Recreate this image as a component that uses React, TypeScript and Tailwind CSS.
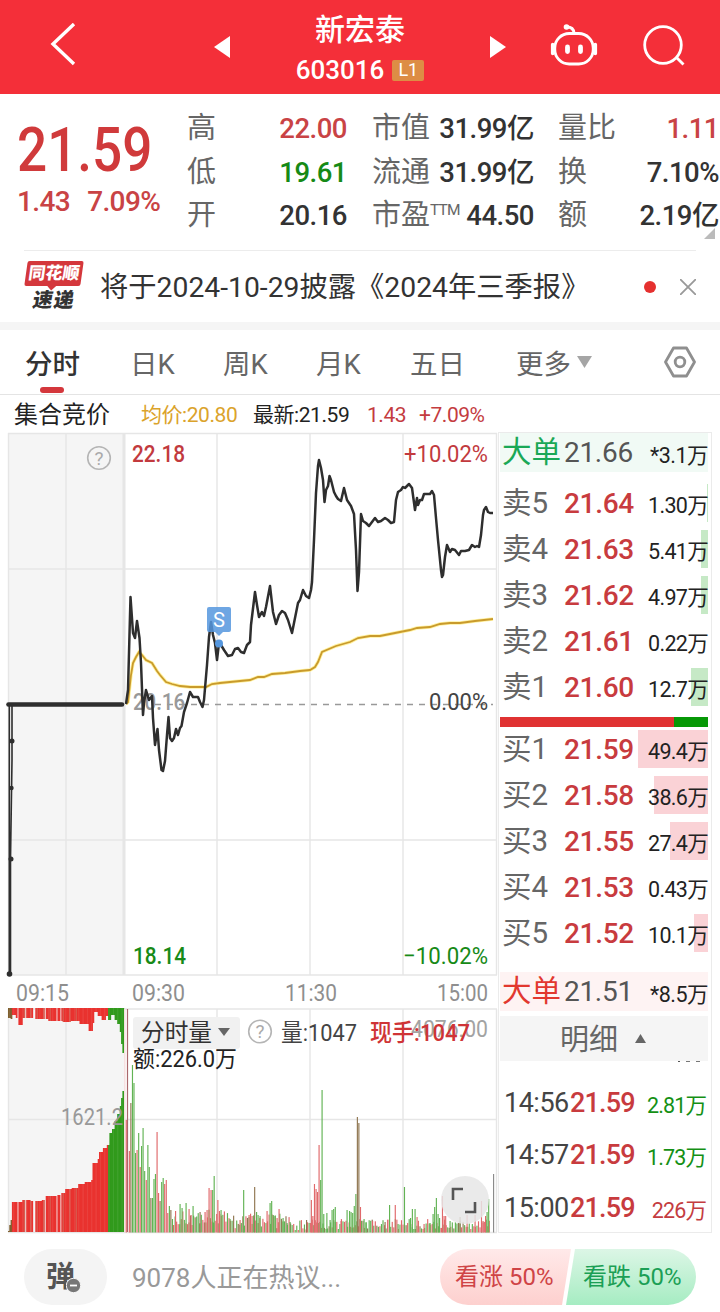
import React from "react"

type Bar = [number, number, string]

const RED = "#e9322f"
const GREEN = "#319a1c"

const PRICE =
  "126,704 128,690 130.5,597 133,633 135,638 137,621 139.5,638 141,663 143,715 144,703 146,690 149,700 152,696 153,718 155,745 157.5,729 159,750 161.5,770 163,771 165,761 167,735 168.5,717 170,738 172,741 174,738 176,729 178,735 180,728 181.5,726 184,712 187,703 190,692 193,697 198,697 200,702 202.5,707 204,700 207,665 209,637 211,622 213,635 215,643 217,660 219,643 221,645 224,650 228,656 232,655 235,649 238,648 241,652 244,653 247,645 250,642 251,625 255,592 257,605 259,617 262,612 264,616 266,607 270,586 273,612 276,624 279,615 282,611 285,613 288,620 292,633 294,623 298,603 300,600 303,590 306,596 309,598 311,590 312,582 314,540 316,493 318,466 319,460 321,468 323,480 324.5,502 326,490 328,486 329.5,476 331,480 334,492 336,496 338,499 341,501 344,488 347,500 351,506 354,514 356,550 357.5,591 359,572 361,514 363,521 366,523 369,526 372,522 375,518 378,522 381,521 385,518 388,520 391,523 394,522 396,500 398,492 401,490 403,487 405,488 407,486 409,484 412,488 415,510 417,498 418,505 420,500 422,500 424,494 430,494 432,491 434,495 436,518 438,540 441,570 442,577 443,575 445,557 447,545 450,552 452,549 455,550 459,555 461,551 465,551 469,550 472,545 475,547 477,546 479,547 481,535 483,515 484,510 486,507 488,512 490,513 493,513"

const AVERAGE =
  "126,704 128,702 131,675 133,663 136,657 139,652 142,655 146,660 152,663 157,671 160,675 166,682 172,684 180,686 190,687 206,687 212,684 220,683 230,682 240,681 250,680 258,677 264,677 272,674 285,673 300,671 310,670 315,667 318,662 322,652 336,646 350,642 358,638 370,636 380,636 395,633 410,630 417,628 430,627 440,624 450,623 460,623 475,621 493,619"

// [x, top, colour]
const PEAKS: Bar[] = [
  [126.2, 1120, "r"], [129.3, 1151, "r"], [130.8, 1103, "d"], [132.4, 1065, "g"], [133.9, 1083, "g"], [135.5, 1153, "g"],
  [137, 1150, "r"], [138.6, 1133, "g"], [140.1, 1167, "r"], [141.5, 1146, "g"], [143, 1128, "g"], [144.6, 1171, "g"],
  [146.2, 1180, "r"], [147.8, 1145, "g"], [149.2, 1167, "g"], [150.8, 1198, "d"], [152.4, 1198, "g"], [153.9, 1179, "g"],
  [155.4, 1174, "g"], [157, 1132, "r"], [158.5, 1193, "r"], [160, 1201, "d"], [161.6, 1182, "g"], [163.1, 1178, "g"],
  [164.6, 1184, "r"], [166.2, 1180, "r"], [167.7, 1213, "r"], [169.3, 1206, "g"], [170.8, 1210, "d"], [172.4, 1219, "g"],
  [175.5, 1211, "r"], [180, 1204, "g"], [182, 1208, "g"], [186, 1203, "g"], [189, 1209, "r"], [191, 1215, "r"], [193, 1206, "g"],
  [200, 1212, "d"], [205, 1212, "r"], [207, 1210, "r"], [209, 1188, "r"], [211, 1190, "r"], [212.6, 1190, "g"], [214.1, 1176, "g"],
  [217.8, 1200, "r"], [219.4, 1211, "r"], [221, 1210, "g"], [230, 1219, "g"], [240, 1220, "r"], [243.6, 1190, "g"], [249, 1215, "r"],
  [252, 1216, "r"], [254.6, 1187, "d"], [256.5, 1212, "g"], [258, 1215, "g"], [260, 1216, "g"], [267, 1211, "r"], [270, 1203, "g"],
  [271.6, 1201, "g"], [273.2, 1215, "g"], [275, 1216, "g"], [277, 1218, "r"], [279, 1209, "r"], [283, 1218, "g"], [287, 1223, "g"],
  [290, 1222, "g"], [306.5, 1220, "d"], [311.3, 1200, "r"], [312.8, 1216, "r"], [314.4, 1184, "r"], [316, 1189, "r"],
  [317.5, 1192, "r"], [319, 1145, "r"], [320.6, 1180, "g"], [322, 1090, "g"], [323.7, 1214, "g"], [326.8, 1213, "g"],
  [330, 1220, "g"], [332, 1210, "g"], [333.6, 1209, "g"], [335.2, 1207, "g"], [341, 1221, "r"], [347, 1210, "g"], [349.5, 1211, "g"],
  [351, 1212, "g"], [352.6, 1213, "g"], [354.2, 1206, "g"], [355.8, 1194, "g"], [357.3, 1117, "d"], [358.8, 1123, "d"],
  [360.4, 1207, "r"], [364, 1219, "g"], [366, 1222, "g"], [372.5, 1221, "r"], [385, 1222, "d"], [389.5, 1205, "g"],
  [395.2, 1205, "r"], [398, 1224, "g"], [404.4, 1187, "g"], [410.5, 1218, "g"], [412.3, 1209, "g"], [415, 1209, "g"],
  [417, 1217, "r"], [424, 1224, "r"], [430, 1223, "g"], [433, 1214, "g"], [434.6, 1207, "g"], [436.3, 1198, "g"], [438, 1214, "g"],
  [439.5, 1218, "g"], [442.4, 1196, "r"], [444, 1216, "r"], [445.6, 1216, "r"], [450, 1221, "g"], [460, 1217, "d"], [467, 1215, "r"],
  [475, 1215, "r"], [481.4, 1201, "r"], [483, 1221, "r"], [485.5, 1216, "r"], [487, 1212, "g"], [488.6, 1199, "g"], [493.5, 1174, "n"],
]

const BAR_FILL: Record<string, string> = { r: "#e0696b", g: "#62b354", d: "#8f7650", n: "#8b8b8b" }

// low trading minutes between the peaks
const QUIET: Bar[] = Array.from({ length: 206 }, (_, i) => {
  const x = 173.5 + i * 1.54
  const noise = (i * 37 + ((i * i) % 17) * 11) % 19
  const base = x < 235 ? 7 : x > 291 && x < 308 ? 2 : 3
  return [x, 1232 - base - noise * (x < 290 ? 0.85 : 0.55), "rgdgrrg"[(i * 5 + (i % 4)) % 7]]
})

const FLOOR = [
  [8, 1231], [9, 1225], [10, 1220], [12, 1202], [22, 1200], [30, 1201], [42, 1200], [44, 1196], [56, 1195], [60, 1193],
  [65, 1189], [72, 1188], [78, 1184], [85, 1182], [91, 1180], [92, 1163], [97, 1159], [99, 1152], [103, 1148], [106, 1145],
  [109, 1133], [112, 1129], [115, 1121], [117, 1114], [119, 1106], [121, 1098], [122.5, 1091],
]
const CEILING = [
  [8, 1018], [10, 1019], [12, 1015], [15, 1018], [18, 1025], [22, 1018], [32, 1019], [48, 1021], [62, 1022], [70, 1021],
  [79, 1024], [84, 1024], [89, 1031], [92, 1023], [94, 1012], [97, 1016], [101, 1020], [105, 1016], [108, 1020], [110, 1015],
  [114, 1020], [117, 1024], [120, 1032], [121.5, 1044], [122.5, 1053],
]

function level(steps: number[][], x: number) {
  let y = steps[0][1]
  for (const s of steps) if (s[0] <= x) y = s[1]
  return y
}

const GAPS = [17, 25, 33.3, 34.6, 44.5, 48, 52, 56, 60.5]
const AUCTION = Array.from({ length: 89 }, (_, i) => 8.4 + i * 1.3)

interface LabelProps {
  x: number
  y: number
  w: number
  size?: number
  fill: string
  weight?: number
  children: React.ReactNode
}

function Label({ x, y, w, size = 24, fill, weight = 500, children }: LabelProps) {
  return (
    <text
      x={x}
      y={y}
      textLength={w}
      lengthAdjust="spacingAndGlyphs"
      fontSize={size}
      fontWeight={weight}
      fill={fill}
    >
      {children}
    </text>
  )
}

function Header() {
  return (
    <header className="flex h-[94px] items-center bg-[#f42f39] text-white">
      <svg className="ml-[48px] h-[48px] w-[30px]" viewBox="0 0 30 48" fill="none" stroke="#fff" strokeWidth="3.4">
        <path d="M26 4 5 24l21 20" transform="translate(0 -3)" />
      </svg>
      <svg className="ml-[136px] h-[22px] w-4" viewBox="0 0 16 22" fill="#fff">
        <path d="M16 0v22L0 11z" />
      </svg>
      <div className="ml-[64px] flex h-full w-[132px] flex-col items-center">
        <h1 className="mt-[9px] h-[42px] text-[30px] leading-[42px] font-medium">新宏泰</h1>
        <div className="flex h-[38px] items-center gap-2">
          <span className="text-[26px] font-medium leading-none">603016</span>
          <span className="flex h-[21px] w-8 items-center justify-center rounded-[2px] bg-[#dd8d45] text-[18px] leading-none">
            L1
          </span>
        </div>
      </div>
      <svg className="ml-[64px] h-[22px] w-4" viewBox="0 0 16 22" fill="#fff">
        <path d="M0 0v22l16-11z" />
      </svg>
      <svg className="ml-[44px] h-12 w-12" viewBox="0 0 48 48" fill="none" stroke="#fff" strokeWidth="2.8">
        <rect x="4.8" y="10.5" width="38.4" height="30.500" rx="14.5" />
        <path d="M24 10c-.3-4-3-6-7-6" />
        <circle cx="16.500" cy="4" r="2.800" fill="#fff" stroke="none" />
        <path d="M2.700 21.500v9M45.300 21.500v9" strokeWidth="3.600" strokeLinecap="round" />
        <path d="M17.500 24v4.500M30.500 24v4.500" strokeWidth="4.800" strokeLinecap="round" />
      </svg>
      <svg className="ml-[44px] h-11 w-11" viewBox="0 0 44 44" fill="none" stroke="#fff" strokeWidth="2.800">
        <circle cx="21" cy="20" r="18.300" />
        <path d="m34 32 7.500 7.500" />
      </svg>
    </header>
  )
}

function Stat({ label, value, color = "text-[#333]", sup }: { label: string; value: string; color?: string; sup?: string }) {
  return (
    <div className="flex h-[43.500px] items-center justify-between whitespace-nowrap">
      <span className="flex text-[29px] leading-[43px] text-[#666]">
        {label}
        {sup && <span className="-mt-[5px] text-[15.500px] tracking-[-0.800px]">{sup}</span>}
      </span>
      <span className={"text-[27.500px] leading-[43px] font-medium tracking-[-0.500px] " + color}>{value}</span>
    </div>
  )
}

function Summary() {
  return (
    <section className="relative flex h-[156px] pt-[13px]">
      <div className="w-[187px] pl-[17px] text-[#d03a3b]">
        <div className="mt-[7px] w-[150px] origin-left scale-x-[0.87] text-[61px] leading-[72px] font-medium">21.59</div>
        <div className="flex w-[150px] gap-[17px] text-[28px] leading-[32px] font-medium tracking-[-0.600px] text-[#c94345]">
          <span>1.43</span>
          <span>7.09%</span>
        </div>
      </div>
      <div className="w-[160px]">
        <Stat label="高" value="22.00" color="text-[#c94345]" />
        <Stat label="低" value="19.61" color="text-[#168a16]" />
        <Stat label="开" value="20.16" />
      </div>
      <div className="ml-[25px] w-[162px]">
        <Stat label="市值" value="31.99亿" />
        <Stat label="流通" value="31.99亿" />
        <Stat label="市盈" value="44.50" sup="TTM" />
      </div>
      <div className="ml-[24px] w-[161px]">
        <Stat label="量比" value="1.11" color="text-[#c94345]" />
        <Stat label="换" value="7.10%" />
        <Stat label="额" value="2.19亿" />
      </div>
      <svg className="absolute right-[5px] bottom-[11px] h-[11px] w-[11px]" viewBox="0 0 11 11" fill="#bbb">
        <path d="M11 0v11H0z" />
      </svg>
    </section>
  )
}

function News() {
  return (
    <section className="mx-6 flex h-[72px] items-center border-t border-[#ececec]">
      <div className="flex w-[60px] flex-col items-center">
        <div className="relative flex h-[25px] w-[56px] -skew-x-[8deg] items-center justify-center rounded-[2px] bg-[#d4373c] text-[17px] leading-none font-black text-white">
          同花顺
          <span className="absolute -bottom-[3px] left-[24px] h-[7px] w-[7px] rotate-45 bg-[#d4373c]" />
        </div>
        <div className="mt-[2px] -skew-x-[10deg] text-[20px] leading-[24px] font-black tracking-[1px] text-[#333]">速递</div>
      </div>
      <p className="mt-[3px] ml-[16px] flex-1 text-[28.300px] leading-[40px] whitespace-nowrap text-[#333]">
        将于2024-10-29披露《2024年三季报》
      </p>
      <span className="h-3 w-3 rounded-full bg-[#e5302f]" />
      <svg className="ml-[24px] h-4 w-4" viewBox="0 0 16 16" stroke="#999" strokeWidth="1.800">
        <path d="m0 0 16 16M16 0 0 16" />
      </svg>
    </section>
  )
}

function Tabs() {
  return (
    <nav className="flex h-[73px] items-center border-t-8 border-b border-t-[#f5f5f5] border-b-[#e4e4e4] text-[27.500px] whitespace-nowrap text-[#666]">
      <div className="flex pt-[5px] leading-[40px]">
        <div className="relative ml-[25px] w-[105px] font-medium text-[#333]">
          分时
          <span className="absolute top-[42px] left-[15px] h-[6px] w-6 rounded-full bg-[#d4373c]" />
        </div>
        <div className="w-[93px]">日K</div>
        <div className="w-[93px]">周K</div>
        <div className="w-[94px]">月K</div>
        <div className="w-[106px]">五日</div>
        <div className="w-[61px]">更多</div>
      </div>
      <svg className="h-[12px] w-[15px]" viewBox="0 0 15 12" fill="#a5a5a5">
        <path d="M0 0h15L7.500 12z" />
      </svg>
      <svg className="ml-[72px] h-8 w-8" viewBox="0 0 32 32" fill="none" stroke="#8f8f8f" strokeWidth="2.800">
        <path d="M9.500 2h13L30.500 16l-8 14h-13L1.500 16z" strokeLinejoin="round" />
        <circle cx="16" cy="16" r="4.800" />
      </svg>
    </nav>
  )
}

function InfoLine() {
  return (
    <div className="flex h-[37px] items-center pt-[4px] text-[21px] leading-[33px] whitespace-nowrap tracking-[-0.450px] text-[#222]">
      <span className="ml-[14px] w-[127px] text-[24px] tracking-normal">集合竞价</span>
      <span className="w-[112px] text-[#dba32b]">均价:20.80</span>
      <span className="w-[114px]">最新:21.59</span>
      <span className="w-[52px] text-[#c43c3f]">1.43</span>
      <span className="text-[#c43c3f]">+7.09%</span>
    </div>
  )
}

function Chart() {
  return (
    <svg className="block h-[802px] w-[498px] shrink-0" viewBox="0 432 498 802">
      <rect x="8" y="433" width="116" height="542" fill="#f5f5f5" />
      <rect x="8" y="1009" width="116" height="223" fill="#f5f5f5" />
      <g stroke="#e6e6e6" strokeWidth="1.400">
        <path d="M8 433.500H497M8 569H497M8 840H497M8 975H497M8 1009H497M8 1119.500H497M8 1232.500H497" />
        <path d="M8.500 433V975M66 433V975M217 433V975M310 433V975M403 433V975M496.500 433V975" />
        <path d="M8.500 1009V1232M66 1009V1232M217 1009V1232M310 1009V1232M403 1009V1232M496.500 1009V1232" />
        <path d="M124 433V975" strokeWidth="3" />
      </g>

      <path d="M155 704.500H493" stroke="#999" strokeWidth="1.500" strokeDasharray="6 6" />
      <Label x={133} y={710} w={52} fill="#999">20.16</Label>
      <polyline points={AVERAGE} fill="none" stroke="#fff2a0" strokeWidth="3.500" />
      <polyline points={AVERAGE} fill="none" stroke="#c99a2c" strokeWidth="1.800" />
      <polyline points={PRICE} fill="none" stroke="#2e2e2e" strokeWidth="2.500" strokeLinejoin="round" />

      <path d="M8.500 704.500H122" stroke="#2e2e2e" strokeWidth="4.600" strokeLinecap="round" />
      <path d="M9.300 706V974M12 706V760L10.500 860V974" fill="none" stroke="#2e2e2e" strokeWidth="1.600" />
      <g fill="#2e2e2e">
        <circle cx="12" cy="741" r="2.500" />
        <circle cx="11.500" cy="788" r="2.200" />
        <circle cx="11" cy="859" r="2.500" />
        <circle cx="9.500" cy="974" r="2.800" />
      </g>

      <g fill="#5597de">
        <path d="M209 607h20a2 2 0 0 1 2 2v21a2 2 0 0 1-2 2h-6l-4 4-4-4h-6a2 2 0 0 1-2-2v-21a2 2 0 0 1 2-2z" opacity=".85" />
        <circle cx="219" cy="643.500" r="4" />
      </g>
      <Label x={213} y={627} w={12} size={21} weight={400} fill="#fff">S</Label>

      <Label x={132} y={462} w={53} fill="#c23a3e">22.18</Label>
      <Label x={404} y={462} w={84} fill="#c23a3e" weight={450}>+10.02%</Label>
      <Label x={429} y={710} w={59} fill="#444" weight={400}>0.00%</Label>
      <Label x={133} y={964} w={53} fill="#178a17">18.14</Label>
      <Label x={403} y={964} w={85} fill="#178a17" weight={450}>−10.02%</Label>
      <Label x={16} y={1001} w={53} fill="#8f8f8f" weight={400}>09:15</Label>
      <Label x={132} y={1001} w={53} fill="#8f8f8f" weight={400}>09:30</Label>
      <Label x={285} y={1001} w={52} fill="#8f8f8f" weight={400}>11:30</Label>
      <Label x={437} y={1001} w={51} fill="#8f8f8f" weight={400}>15:00</Label>

      <g fill="none" stroke="#b5b5b5" strokeWidth="1.600">
        <circle cx="99" cy="458" r="11.300" />
        <circle cx="260" cy="1031.500" r="11.300" />
      </g>
      <Label x={94.500} y={464.500} w={9} size={18} weight={400} fill="#aaa">?</Label>
      <Label x={255.500} y={1038} w={9} size={18} weight={400} fill="#aaa">?</Label>

      {AUCTION.map((x, i) => {
        const fill = x >= 108 ? GREEN : i < 3 ? "#7f6030" : i % 5 === 2 && x < 80 ? "#d75b50" : RED
        if (GAPS.some((g) => Math.abs(g - x) < 0.6)) return null
        const low = level(FLOOR, x)
        return (
          <g key={i} fill={fill}>
            <rect x={x - 0.4} y="1008" width="1.750" height={level(CEILING, x) - 1008} />
            <rect x={x - 0.4} y={low} width="1.750" height={1232 - low} />
          </g>
        )
      })}
      <Label x={61} y={1125} w={62} fill="#999" weight={400}>1621.2</Label>

      <path d="M124.800 1009V1232" stroke="#f7dfdf" strokeWidth="1.500" />
      <path d="M127.500 1009V1232" stroke="#a9676b" strokeWidth="1.200" />
      {[...QUIET, ...PEAKS].map(([x, top, kind], i) => (
        <rect key={i} x={x - 0.5} y={top} width="1.150" height={1232.5 - top} fill={BAR_FILL[kind]} />
      ))}

      <rect x="133" y="1017" width="107" height="32" rx="3" fill="#f1f1f1" />
      <Label x={141} y={1041} w={71} size={24} fill="#333" weight={400}>分时量</Label>
      <path d="M218 1028h12l-6 8z" fill="#666" />
      <Label x={281} y={1041} w={76} size={24} fill="#444" weight={400}>量:1047</Label>
      <Label x={411} y={1037} w={77} fill="#a3a3a3" weight={400}>4076.00</Label>
      <Label x={370} y={1041} w={100} size={24} fill="#cf3436">现手:1047</Label>
      <Label x={133} y={1067} w={104} size={23} fill="#222" weight={400}>额:226.0万</Label>

      <circle cx="465" cy="1200" r="24" fill="#e6e6e6" opacity=".85" />
      <path d="M453 1200V1189H463M465 1212H475V1202" fill="none" stroke="#555" strokeWidth="2.600" />
    </svg>
  )
}

interface Quote {
  name: string
  price: string
  volume: string
  bar: number
}

const SELLS: Quote[] = [
  { name: "卖5", price: "21.64", volume: "1.30万", bar: 1 },
  { name: "卖4", price: "21.63", volume: "5.41万", bar: 7 },
  { name: "卖3", price: "21.62", volume: "4.97万", bar: 7 },
  { name: "卖2", price: "21.61", volume: "0.22万", bar: 0 },
  { name: "卖1", price: "21.60", volume: "12.7万", bar: 17 },
]

const BUYS: Quote[] = [
  { name: "买1", price: "21.59", volume: "49.4万", bar: 70 },
  { name: "买2", price: "21.58", volume: "38.6万", bar: 54 },
  { name: "买3", price: "21.55", volume: "27.4万", bar: 38 },
  { name: "买4", price: "21.53", volume: "0.43万", bar: 0 },
  { name: "买5", price: "21.52", volume: "10.1万", bar: 14 },
]

const TRADES = [
  { time: "14:56", price: "21.59", volume: "2.81万", color: "text-[#149014]" },
  { time: "14:57", price: "21.59", volume: "1.73万", color: "text-[#149014]" },
  { time: "15:00", price: "21.59", volume: "226万", color: "text-[#c43c3f]" },
]

function QuoteRow({ quote, tint }: { quote: Quote; tint: string }) {
  return (
    <div className="relative flex h-[46px] items-center">
      <span className={"absolute top-[4px] right-0 h-[38px] " + tint} style={{ width: quote.bar }} />
      <span className="relative mt-[2px] ml-[2px] w-[62px] text-[29.500px] text-[#666]">{quote.name}</span>
      <span className="relative mt-[2px] text-[28px] font-medium tracking-[-0.300px] text-[#c83b3e]">{quote.price}</span>
      <span className="relative mt-[6px] ml-auto text-[21.500px] tracking-[-0.700px] text-[#222]">{quote.volume}</span>
    </div>
  )
}

function BigOrder({ color, bg, price, volume }: { color: string; bg: string; price: string; volume: string }) {
  return (
    <div className={"flex h-[39px] items-center " + bg}>
      <span className={"mt-px ml-[2px] w-[62px] text-[29.500px] " + color}>大单</span>
      <span className="mt-px text-[28px] tracking-[-0.300px] text-[#555]">{price}</span>
      <span className="mt-[6px] ml-auto text-[21.500px] tracking-[-0.500px] text-[#222]">{volume}</span>
    </div>
  )
}

function OrderBook() {
  return (
    <aside className="h-[801px] w-[214px] border border-[#ebebeb] pr-[3px] pl-px leading-none whitespace-nowrap text-[#333]">
      <BigOrder color="text-[#1aa856]" bg="bg-[#f1faf5]" price="21.66" volume="*3.1万" />
      <div className="mt-[8px]">
        {SELLS.map((q) => (
          <QuoteRow key={q.name} quote={q} tint="bg-[#c6e9c6]" />
        ))}
      </div>
      <div className="mt-[7px] flex h-[10px]">
        <span className="w-[174px] bg-[#e03232]" />
        <span className="flex-1 bg-[#069806]" />
      </div>
      <div className="mt-[-1px]">
        {BUYS.map((q) => (
          <QuoteRow key={q.name} quote={q} tint="bg-[#fad2d6]" />
        ))}
      </div>
      <div className="mt-[16px]">
        <BigOrder color="text-[#e2382f]" bg="bg-[#fef3f3]" price="21.51" volume="*8.5万" />
      </div>
      <div className="mt-[5px] flex h-[45px] items-center bg-[#f5f5f5] pt-[3px] pl-[60px] text-[29px] text-[#666]">
        明细
        <svg className="-mt-[3px] ml-[17px] h-[9px] w-[11px]" viewBox="0 0 11 9" fill="#666">
          <path d="M5.500 0 11 9H0z" />
        </svg>
      </div>
      <div className="flex h-px justify-end gap-[6px] pr-[8px]">
        <span className="w-[2px] bg-[#555]" />
        <span className="w-[4px] bg-[#777]" />
        <span className="w-[4px] bg-[#777]" />
      </div>
      <div className="mt-[15px]">
        {TRADES.map((t) => (
          <div key={t.time} className="flex h-[52.500px] items-center">
            <span className="ml-[4px] w-[66px] text-[27px] tracking-[-0.500px] text-[#444]">{t.time}</span>
            <span className="text-[27px] font-medium tracking-[-0.800px] text-[#c83b3e]">{t.price}</span>
            <span className={"mt-[4px] mr-[2px] ml-auto text-[21.500px] tracking-[-0.900px] " + t.color}>{t.volume}</span>
          </div>
        ))}
      </div>
    </aside>
  )
}

function Footer() {
  return (
    <footer className="flex h-[78px] items-center px-6 pt-[8px] leading-none whitespace-nowrap">
      <div className="flex h-14 w-[83px] items-center rounded-full bg-[#f4f4f4] pl-[22px]">
        <div className="relative text-[29px] font-bold text-[#555]">
          弹
          <svg className="absolute top-[15px] left-[20px] h-[15px] w-[15px]" viewBox="0 0 15 15">
            <circle cx="7.500" cy="7.500" r="7.200" fill="#777" stroke="#f4f4f4" />
            <path d="M4 7.500h7" stroke="#fff" strokeWidth="1.800" />
          </svg>
        </div>
      </div>
      <p className="mt-[2px] ml-[25px] w-[308px] text-[26px] text-[#999]">9078人正在热议...</p>
      <button className="h-14 w-[131px] rounded-l-full bg-linear-to-b from-[#ffe9e9] to-[#fdd0ce] pl-[15px] text-left text-[24px] text-[#cf4446] [clip-path:polygon(0_0,100%_0,122px_100%,0_100%)]">
        看涨 50%
      </button>
      <button className="-ml-[5px] h-14 w-[130px] rounded-r-full bg-linear-to-b from-[#dcf6e6] to-[#a5ecc2] pl-[17px] text-left text-[24px] text-[#1b9f55] [clip-path:polygon(9px_0,100%_0,100%_100%,0_100%)]">
        看跌 50%
      </button>
    </footer>
  )
}

export default function App() {
  return (
    <main className="h-[1312px] w-[720px] overflow-hidden bg-white font-[Roboto,'Noto_Sans_CJK_SC',sans-serif]">
      <Header />
      <Summary />
      <News />
      <Tabs />
      <InfoLine />
      <div className="flex h-[802px]">
        <Chart />
        <OrderBook />
      </div>
      <Footer />
    </main>
  )
}
